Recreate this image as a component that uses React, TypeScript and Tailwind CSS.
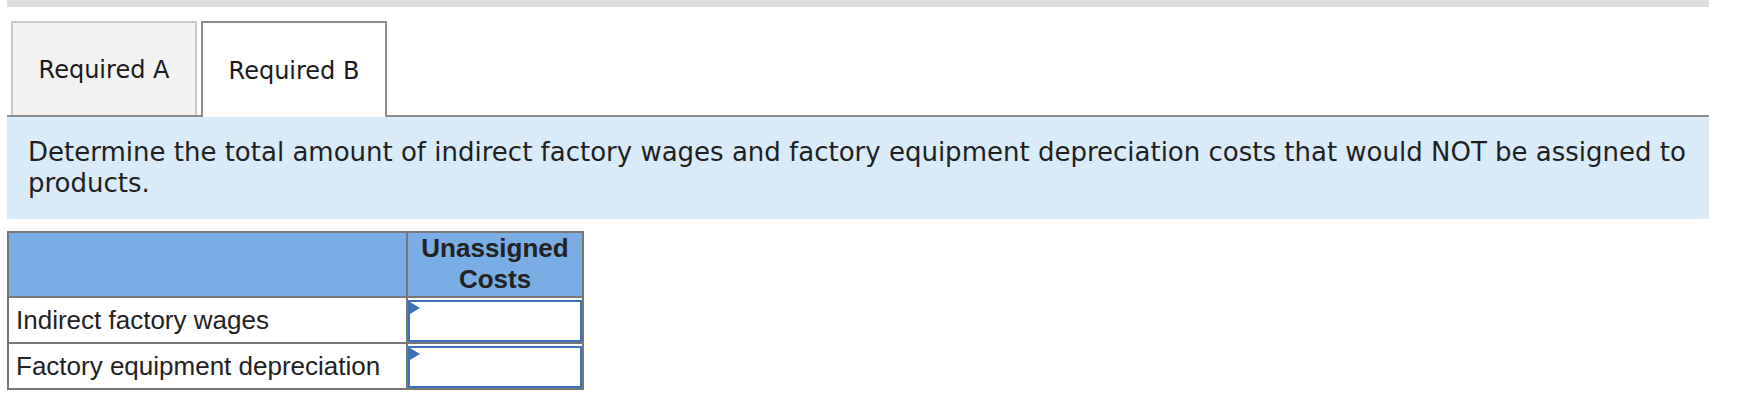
import React from 'react'

const rows = ['Indirect factory wages', 'Factory equipment depreciation']

function Tab({ label, active }: { label: string; active?: boolean }) {
  if (active) {
    return (
      <div className="relative -mb-[2px] flex h-[96px] w-[186px] items-center justify-center border-2 border-b-0 border-[#8c8c8c] bg-white pt-[2px] text-[24px] text-[#1a1a1a]">
        {label}
      </div>
    )
  }
  return (
    <div className="flex h-[94px] w-[186px] items-center justify-center border-2 border-b-0 border-[#c8c8c8] bg-[#f2f2f2] pt-[2px] text-[24px] text-[#1a1a1a]">
      {label}
    </div>
  )
}

function AnswerCell() {
  return (
    <div className="bg-white pt-[2px]">
      <div className="relative h-full w-full border-2 border-[#3b73b9] bg-white">
        <span className="absolute left-0 top-0 h-0 w-0 border-y-[6px] border-l-[10px] border-y-transparent border-l-[#3b73b9]" />
      </div>
    </div>
  )
}

export default function App() {
  return (
    <div className="h-[403px] w-full bg-white font-['DejaVu_Sans',Verdana,sans-serif]">
      <div className="ml-[7px] w-[1702px]">
        <div className="h-[7px] bg-[#dedede]" />

        <div className="mt-[14px] flex items-end gap-[4px] border-b-2 border-[#8c8c8c] pl-[4px]">
          <Tab label="Required A" />
          <Tab label="Required B" active />
        </div>

        <div className="bg-[#d9eaf8] px-[21px] py-[20px] text-[26px] leading-[31px] text-[#1f1f1f]">
          Determine the total amount of indirect factory wages and factory equipment depreciation costs
          that would NOT be assigned to products.
        </div>

        <div className="mt-[12px] grid w-[577px] grid-cols-[397px_174px] grid-rows-[63px_44px_44px] gap-[2px] bg-[#777777] p-[2px] font-['Liberation_Sans',Arial,sans-serif] text-[26px] text-[#222]">
          <div className="bg-[#79ade3]" />
          <div className="flex flex-col items-center justify-center bg-[#79ade3] pb-[2px] text-center font-bold leading-[31px]">
            <span>Unassigned</span>
            <span>Costs</span>
          </div>
          {rows.map((label) => (
            <React.Fragment key={label}>
              <div className="flex items-center bg-white pl-[7px]">{label}</div>
              <AnswerCell />
            </React.Fragment>
          ))}
        </div>
      </div>
    </div>
  )
}
